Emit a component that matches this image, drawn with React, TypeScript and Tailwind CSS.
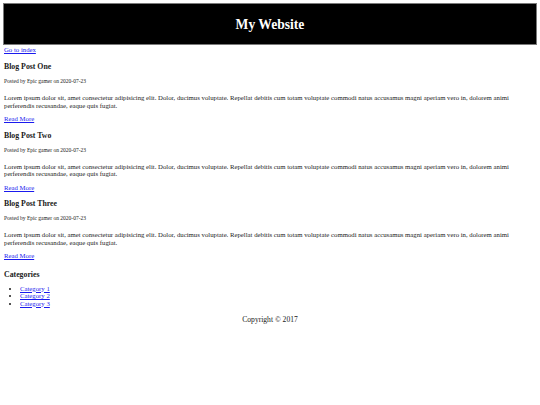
import React from 'react';

const posts = [
  { id: 1, title: 'Blog Post One' },
  { id: 2, title: 'Blog Post Two' },
  { id: 3, title: 'Blog Post Three' },
];

const lorem =
  'Lorem ipsum dolor sit, amet consectetur adipisicing elit. Dolor, ducimus voluptate. Repellat debitis cum totam voluptate commodi natus accusamus magni aperiam vero in, dolorem animi perferendis recusandae, eaque quis fugiat.';

const linkClass = 'text-[#1a1aee] underline';

const App: React.FC = () => {
  return (
    <div className="min-h-[405px] bg-white px-[4px] pt-[3px] text-[6.75px] leading-[7.5px] text-[#1a1a1a] [font-family:'Liberation_Serif',serif]">
      <header className="-mx-[1px] flex h-[42px] items-center justify-center border border-[#7a7a7a] bg-black">
        <h1 className="mt-[2px] text-[13.6px] font-bold leading-none text-white">My Website</h1>
      </header>

      <a href="#" className={`${linkClass} mt-[1px] block w-fit`}>
        Go to index
      </a>

      {posts.map((post, i) => (
        <article key={post.id}>
          <h3
            className={`${i === 0 ? 'mt-[8.5px]' : 'mt-[8px]'} text-[7.8px] font-bold leading-[9px]`}
          >
            {post.title}
          </h3>
          <p className="mt-[7px] text-[5.5px] leading-[6px]">Posted by Epic gamer on 2020-07-23</p>
          <p className="mt-[10px]">{lorem}</p>
          <p className="mt-[6px]">
            <a href="#" className={linkClass}>
              Read More
            </a>
          </p>
        </article>
      ))}

      <h3 className="mt-[10px] text-[7.8px] font-bold leading-[9px]">Categories</h3>
      <ul className="mt-[6px] list-disc pl-[16px]">
        <li>
          <a href="#" className={linkClass}>Category 1</a>
        </li>
        <li>
          <a href="#" className={linkClass}>Category 2</a>
        </li>
        <li>
          <a href="#" className={linkClass}>Category 3</a>
        </li>
      </ul>

      <footer className="mt-[8px] text-center text-[7.6px] leading-[9px]">Copyright © 2017</footer>
    </div>
  );
};

export default App;
